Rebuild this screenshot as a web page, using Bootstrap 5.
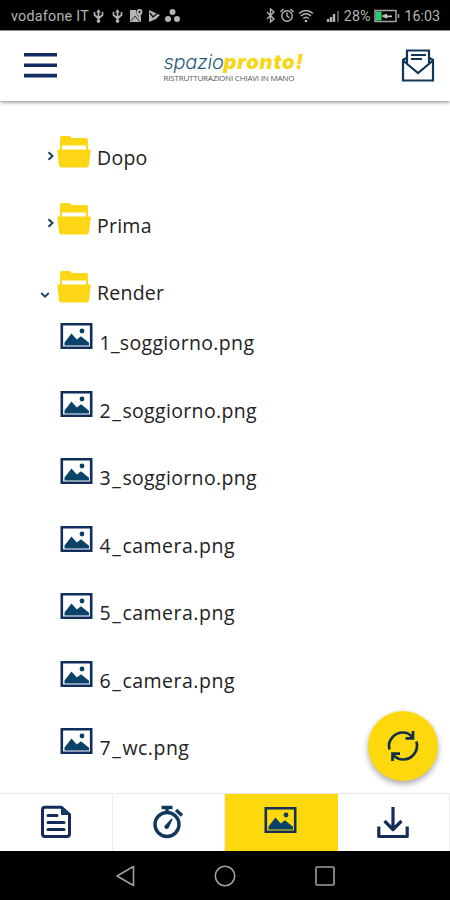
<!DOCTYPE html>
<html lang="it">
<head>
<meta charset="utf-8">
<meta name="viewport" content="width=device-width, initial-scale=1">
<title>Spazio Pronto</title>
<link href="https://cdn.jsdelivr.net/npm/bootstrap@5.3.0/dist/css/bootstrap.min.css" rel="stylesheet">
<style>
:root{--navy:#0c2e55;--sun:#fdd80d}
body{font-family:"Open Sans","Noto Sans",sans-serif;color:#222;height:900px;overflow:hidden}
svg{display:block;flex:none}
.phone{height:900px;width:450px}
.status{height:30px;background:#000;color:#b4b4b4;font:14.3px/30px Roboto,sans-serif;padding:1px 10px 0 11px}
.status .carrier{letter-spacing:.25px}
.topbar{height:71px;border-top:1px solid #888;box-shadow:0 1px 4px rgba(0,0,0,.5);padding:0 15px 0 24px;position:relative;z-index:1}
.brand{width:142px;margin-left:11px;padding-top:1px}
.brand-name{font:italic 300 20px/22px Inter,sans-serif;color:#2b5c7a;white-space:nowrap;letter-spacing:-.3px}
.brand-name b{color:#f5d71c;font-weight:900;letter-spacing:.85px}
.brand-sub{font:8px/9px "Open Sans",sans-serif;letter-spacing:-.2px;color:#555;white-space:nowrap}
.tree{padding:34px 0 0 40px;font-size:19.5px;line-height:24px}
.entry{height:67.5px}
.entry.opened{height:51px}
.chev{width:17px;padding-top:16px}
.chev .shut{margin-left:7px}
.folder-name{margin:11.5px 0 0 6px;letter-spacing:.25px}
.file-pic{margin:2.500px 0 0 20px}
.file-name{margin:10.5px 0 0 6.500px;letter-spacing:.5px}
.file-name.soggiorno{letter-spacing:.34px}
.file-name i{font-style:normal;letter-spacing:1.6px}
.entry.opened + .entry i{letter-spacing:.3px}
.tabs{height:58px;border-top:1px solid #e8e8e8}
.tab-item{border-right:1px solid #ededed;padding-bottom:1px}
.tab-item.current{background:var(--sun);border-color:var(--sun);padding-bottom:6px}
.sysbar{height:49px;background:#000;padding:0 114px}
.refresh{position:absolute;left:368px;top:711px;width:70px;height:70px;background:var(--sun);box-shadow:0 3px 6px rgba(0,0,0,.35);z-index:2}
</style>
<script src="https://cdn.jsdelivr.net/npm/bootstrap@5.3.0/dist/js/bootstrap.bundle.min.js"></script>
</head>
<body class="bg-white">
<svg width="0" height="0" class="position-absolute">
<symbol id="folder" viewBox="0 0 34 33"><path fill="#fdd615" d="M3 15V3q0-2 2-2h7q2 0 2.500 2H29q2 0 2 2V15h-2v-4.500H5v4.500zM1 14.500h32q1 0 .8 1L32 30q-.3 2.500-2.500 2.500h-25Q2.300 32.500 2 30L.3 15.500q-.2-1 .7-1z"/></symbol>
<symbol id="picture" viewBox="0 0 32 26"><path fill="none" stroke="#102f5d" stroke-width="2.600" d="M1.300 1.300h29.400v23.400H1.300z"/><path fill="#0b4268" d="M4 22.500v-3L11 10.500l5.300 6 4.200-3.300 8 6.500v2.800z"/><circle cx="21.500" cy="8" r="2.400" fill="#0b3c63"/></symbol>
<symbol id="chev-r" viewBox="0 0 8 10"><path d="M1.500 1.300 5.500 5l-4 3.700" fill="none" stroke="#173f5c" stroke-width="1.900"/></symbol>
<symbol id="chev-d" viewBox="0 0 10 8"><path d="M1.200 2 5 5.700 8.800 2" fill="none" stroke="#1b4a60" stroke-width="1.900"/></symbol>
</svg>
<div class="phone d-flex flex-column position-relative">
  <div class="status d-flex align-items-center">
    <span class="carrier">vodafone IT</span>
    <svg class="ms-1" width="90" height="18" viewBox="0 0 90 18" fill="#b4b4b4" stroke="#b4b4b4" stroke-width="1.300">
      <g id="usb"><path fill="none" d="M5.500 4v10M1.500 5v3l4 3.500 4-3.500V5" stroke-width="1.700"/><path stroke="none" d="m5.500 2 2.200 3.500H3.300z"/><circle cx="5.500" cy="14" r="1.200"/></g>
      <use href="#usb" x="19"/>
      <path stroke="none" d="M37 3h6c0 3 1 5 3 7l2-1v6H37zM46.500 2a3 3 0 0 1 3 3c0 2-3 5-3 5s-3-3-3-5a3 3 0 0 1 3-3z"/><path d="m38 14 4-5 5 6" stroke="#333" fill="none" stroke-width="1"/><circle cx="46.500" cy="5" r="1" fill="#000" stroke="none"/>
      <path stroke="none" d="M56 3l11 5-4 4-7 3z"/><path d="m57 6 3 4 6-5" stroke="#111" fill="none"/>
      <g stroke="none"><circle cx="79.500" cy="5" r="3"/><circle cx="75" cy="12" r="3"/><circle cx="84" cy="12" r="3"/></g>
    </svg>
    <svg class="ms-auto" width="78" height="18" viewBox="0 0 78 18" fill="none" stroke="#b4b4b4" stroke-width="1.400">
      <path d="m1 5 7 7-3.500 3V2L8 5l-7 7"/><circle cx="21" cy="9" r="5.200"/><path d="M21 5.500V9l2.500 2M14.500 5l3-3M24.500 2l3 3"/>
      <path d="M33 6.500q7-6 14 0M35 9q5-4.500 10 0M37.300 11.500q2.700-2.500 5.400 0" stroke-width="1.600"/><circle cx="40" cy="14" r="1.300" fill="#b4b4b4" stroke="none"/>
      <path d="M62 15v-3M65 15v-5M68 15V7" stroke-width="2.400"/><path d="M72 15V4" stroke="#555" stroke-width="2"/>
    </svg>
    <span>28%</span>
    <svg class="mx-1" width="26" height="16" viewBox="0 0 26 16"><path d="M1 2.500h21v11H1zM24.500 6v4" fill="none" stroke="#a5a5a5" stroke-width="1.500"/><path d="M2 3.500h5.500v9H2z" fill="#22d16b"/><path d="m7 8 6-2.500v2h5v1.800h-5v1.500z" fill="#c5c5c5"/></svg>
    <span>16:03</span>
  </div>
  <header class="topbar bg-white d-flex align-items-center justify-content-between">
    <svg width="33" height="26" viewBox="0 0 33 26" stroke="#132d61" stroke-width="3.600"><path d="M0 1.800h33M0 12.300h33M0 22.600h33"/></svg>
    <div class="brand"><div class="brand-name">spazio<b>pronto!</b></div><div class="brand-sub">RISTRUTTURAZIONI CHIAVI IN MANO</div></div>
    <svg width="34" height="34" viewBox="0 0 34 34" fill="none" stroke="#12365a" stroke-width="2.200"><path d="M5.500 9 2 11v20.500h30V11l-3.500-2M2 11.500 17 24l15-12.500M6 14V1.500h22V14"/><path d="M10 6h15M10 10h11"/></svg>
  </header>
  <main class="tree flex-grow-1">
    <div class="entry d-flex align-items-start"><div class="chev"><svg class="shut" width="8" height="10"><use href="#chev-r"/></svg></div><svg width="34" height="33"><use href="#folder"/></svg><span class="folder-name">Dopo</span></div>
    <div class="entry d-flex align-items-start"><div class="chev"><svg class="shut" width="8" height="10"><use href="#chev-r"/></svg></div><svg width="34" height="33"><use href="#folder"/></svg><span class="folder-name">Prima</span></div>
    <div class="entry opened d-flex align-items-start"><div class="chev"><svg class="mt-1" width="10" height="10"><use href="#chev-d"/></svg></div><svg width="34" height="33"><use href="#folder"/></svg><span class="folder-name">Render</span></div>
    <div class="entry d-flex align-items-start"><svg class="file-pic" width="33" height="26"><use href="#picture"/></svg><span class="file-name soggiorno"><i>1_</i>soggiorno.png</span></div>
    <div class="entry d-flex align-items-start"><svg class="file-pic" width="33" height="26"><use href="#picture"/></svg><span class="file-name soggiorno"><i>2_</i>soggiorno.png</span></div>
    <div class="entry d-flex align-items-start"><svg class="file-pic" width="33" height="26"><use href="#picture"/></svg><span class="file-name soggiorno"><i>3_</i>soggiorno.png</span></div>
    <div class="entry d-flex align-items-start"><svg class="file-pic" width="33" height="26"><use href="#picture"/></svg><span class="file-name"><i>4_</i>camera.png</span></div>
    <div class="entry d-flex align-items-start"><svg class="file-pic" width="33" height="26"><use href="#picture"/></svg><span class="file-name"><i>5_</i>camera.png</span></div>
    <div class="entry d-flex align-items-start"><svg class="file-pic" width="33" height="26"><use href="#picture"/></svg><span class="file-name"><i>6_</i>camera.png</span></div>
    <div class="entry d-flex align-items-start"><svg class="file-pic" width="33" height="26"><use href="#picture"/></svg><span class="file-name"><i>7_</i>wc.png</span></div>
  </main>
  <div class="refresh rounded-circle d-flex align-items-center justify-content-center">
    <svg width="34" height="34" viewBox="0 0 34 34" fill="none" stroke="#12304a" stroke-width="2.700"><path d="M3.500 20.500C1 12 8 3.500 17 3.500q6 0 9.500 5M30.500 12.500C33 22 26 30.500 17 30.500q-6 0-10-5"/><path d="M27 2v7.300h-7.500M6.500 32v-7.300H14"/></svg>
  </div>
  <nav class="tabs row g-0 bg-white flex-shrink-0">
    <div class="tab-item col d-flex align-items-center justify-content-center"><svg width="30" height="34" viewBox="0 0 30 34" fill="none" stroke="#142b5b" stroke-width="3"><path d="M20.500 2.300H4Q1.500 2.300 1.500 5v24q0 2.500 2.500 2.500h22q2.500 0 2.500-2.500V9.500z" stroke-linejoin="round"/><path d="M20.500 2.300V9.500h8z" fill="#16405f" stroke-width="1"/><path d="M7 10.500h9M7 17.500h16M7 24.500h16" stroke-linecap="round"/></svg></div>
    <div class="tab-item col d-flex align-items-center justify-content-center"><svg width="30" height="34" viewBox="0 0 30 34" fill="none" stroke="#12395b" stroke-width="3.400"><circle cx="14" cy="19.500" r="12"/><path d="M8.500 2.500h11M14 3v5M23 5l6 5.500"/><path d="m12 21.500 7-7.500-4 8.500q-2 2-3-1z" fill="#12304f" stroke-width="1.500"/></svg></div>
    <div class="tab-item current col d-flex align-items-center justify-content-center"><svg width="33" height="26"><use href="#picture"/></svg></div>
    <div class="tab-item col d-flex align-items-center justify-content-center"><svg width="32" height="33" viewBox="0 0 32 33" fill="none" stroke="#152d57" stroke-width="3.200"><path d="M16 1v22M7.500 15l8.500 8.500 8.500-8.500M1.800 20.500v10h28.400v-10" stroke-linejoin="round"/></svg></div>
  </nav>
  <div class="sysbar d-flex align-items-center justify-content-between flex-shrink-0">
    <svg width="22" height="22" viewBox="0 0 22 22" fill="none" stroke="#a0a0a0" stroke-width="1.600"><path d="M19.500 1.500v19L3 11z" stroke-linejoin="round"/></svg>
    <svg width="22" height="22" viewBox="0 0 22 22" fill="none" stroke="#a0a0a0" stroke-width="1.600"><circle cx="11" cy="11" r="9.700"/></svg>
    <svg width="22" height="22" viewBox="0 0 22 22" fill="none" stroke="#a0a0a0" stroke-width="1.600"><rect x="2" y="2" width="18" height="18" rx="1"/></svg>
  </div>
</div>
</body>
</html>
